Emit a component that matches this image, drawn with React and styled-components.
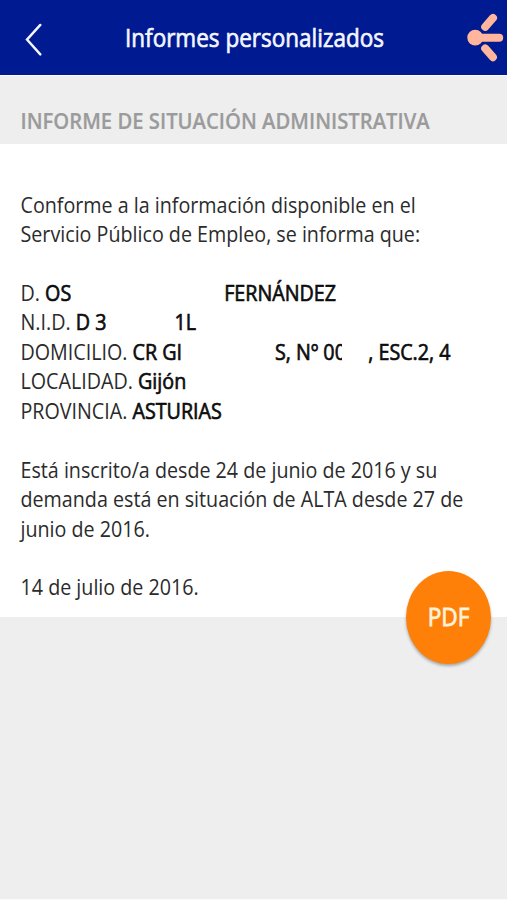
import React from "react";
import styled, { createGlobalStyle } from "styled-components";

const GlobalStyle = createGlobalStyle`
    * {
        box-sizing: border-box;
    }

    body {
        margin: 0;
        background: #eeeeee;
        font-family: "Open Sans", "Noto Sans", sans-serif;
        overflow: hidden;
    }
`

const Screen = styled.div`
    position: relative;
    display: flex;
    flex-direction: column;
    width: 507px;
    height: 900px;
    background: #eeeeee;
    border-bottom: 1px solid #fafafa;
    overflow: hidden;
`

const Header = styled.header`
    display: flex;
    align-items: center;
    justify-content: space-between;
    height: 75px;
    flex: none;
    padding: 1px 4px 0 24px;
    background: #001b92;
    color: #f4f6ff;
`

const IconButton = styled.button`
    display: flex;
    padding: 0;
    border: none;
    background: none;
    cursor: pointer;
`

const Title = styled.h1`
    margin: 0;
    font-size: 22.5px;
    font-weight: 400;
    line-height: 30px;
    white-space: nowrap;
    -webkit-text-stroke: 0.6px currentColor;
    transform: scaleY(1.12);
`

const SectionBar = styled.div`
    display: flex;
    align-items: center;
    height: 69px;
    flex: none;
    padding: 19px 20.5px 0;
    border-top: 1px solid #fafafa;
`

const SectionTitle = styled.h2`
    margin: 0;
    font-size: 20.25px;
    font-weight: 600;
    line-height: 28px;
    white-space: nowrap;
    color: #9b9b9b;
    -webkit-text-stroke: 0.2px currentColor;
    transform: scaleY(1.09);
`

const Report = styled.main`
    height: 473px;
    flex: none;
    padding: 45.6px 20.5px 0;
    background: #ffffff;
    color: #2b2b2b;
`

const Line = styled.p`
    display: flex;
    align-items: center;
    height: 29.46px;
    margin: 0;
    font-size: 19.7px;
    white-space: pre;
    transform: scaleY(1.12);
`

const Strong = styled.strong`
    flex: none;
    width: ${({ $width }) => ($width ? `${$width}px` : "auto")};
    font-weight: 400;
    color: #0c0c0c;
    -webkit-text-stroke: 0.6px currentColor;
`

// white patch over the personal data
const Blank = styled.span`
    position: relative;
    flex: none;
    align-self: stretch;
    width: ${({ $width }) => $width}px;
    background: #ffffff;
`

const PdfButton = styled.button`
    position: absolute;
    right: 16.5px;
    top: 570.5px;
    display: flex;
    align-items: center;
    justify-content: center;
    width: 85px;
    height: 93px;
    padding: 0 0 1px 1px;
    border: none;
    border-radius: 50%;
    background: #ff8008;
    color: #fff3dc;
    font-family: inherit;
    font-size: 22.6px;
    box-shadow: 0 2px 3px rgba(0, 0, 0, 0.3);
    cursor: pointer;
`

const PdfLabel = styled.span`
    -webkit-text-stroke: 0.7px currentColor;
    transform: scaleY(1.12);
`

const Logo = styled.svg`
    overflow: visible;
`

const BackIcon = () => (
    <svg width="19" height="36" viewBox="0 0 19 36" fill="none">
        <path d="M16.3 4.9 L3 19.6 L16.3 34.4" stroke="#f4f6ff" strokeWidth="2.4" strokeLinecap="round" />
    </svg>
)

const LogoIcon = () => (
    <Logo width="37" height="50" viewBox="0 0 37 50" fill="none">
        <circle cx="9.2" cy="24.7" r="7.9" fill="#ffb69c" />
        <g stroke="#ffb69c" strokeWidth="8" strokeLinecap="round">
            <path d="M10 24.7 H33.2" />
            <path d="M19.2 13.8 L27 4.9" />
            <path d="M19.2 35.4 L26.9 44.2" />
        </g>
    </Logo>
)

export default function App() {
    return (
        <>
            <GlobalStyle />
            <Screen>
                <Header>
                    <IconButton aria-label="Volver">
                        <BackIcon />
                    </IconButton>
                    <Title>Informes personalizados</Title>
                    <LogoIcon />
                </Header>
                <SectionBar>
                    <SectionTitle>INFORME DE SITUACIÓN ADMINISTRATIVA</SectionTitle>
                </SectionBar>
                <Report>
                    <Line>Conforme a la información disponible en el</Line>
                    <Line>Servicio Público de Empleo, se informa que:</Line>
                    <Line />
                    <Line>
                        D. <Strong>OS</Strong>
                        <Blank $width={153} />
                        <Strong>FERNÁNDEZ</Strong>
                    </Line>
                    <Line>
                        N.I.D. <Strong>D 3</Strong>
                        <Blank $width={68} />
                        <Strong>1L</Strong>
                    </Line>
                    <Line>
                        DOMICILIO. <Strong>CR GI</Strong>
                        <Blank $width={93} />
                        <Strong $width={66.5}>S, Nº 00</Strong>
                        <Blank $width={26.7} />
                        <Strong>, ESC.2, 4</Strong>
                    </Line>
                    <Line>
                        LOCALIDAD. <Strong>Gijón</Strong>
                    </Line>
                    <Line>
                        PROVINCIA. <Strong>ASTURIAS</Strong>
                    </Line>
                    <Line />
                    <Line>Está inscrito/a desde 24 de junio de 2016 y su</Line>
                    <Line>demanda está en situación de ALTA desde 27 de</Line>
                    <Line>junio de 2016.</Line>
                    <Line />
                    <Line>14 de julio de 2016.</Line>
                </Report>
                <PdfButton>
                    <PdfLabel>PDF</PdfLabel>
                </PdfButton>
            </Screen>
        </>
    )
}
